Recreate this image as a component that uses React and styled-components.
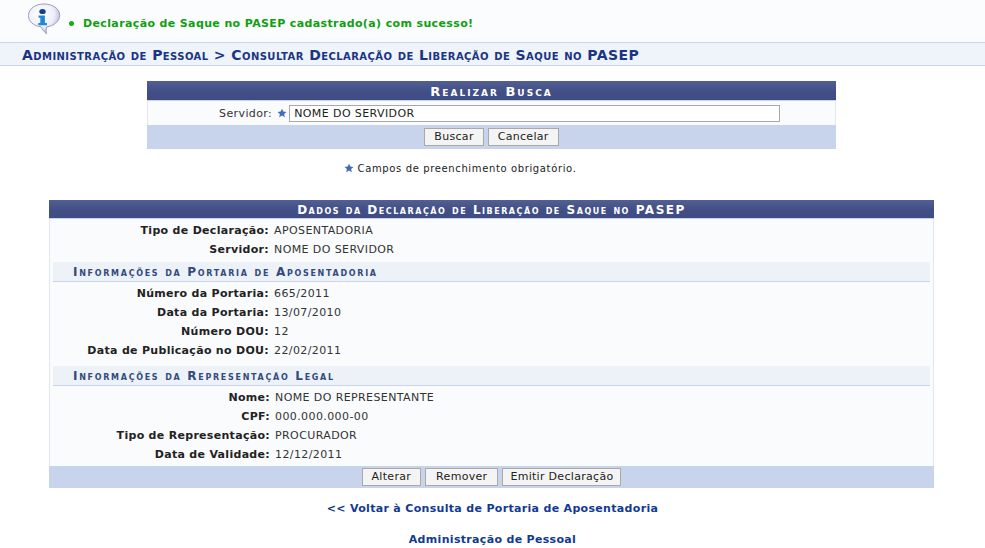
import React from "react";
import styled, { createGlobalStyle } from "styled-components";

const GlobalStyle = createGlobalStyle`
  html, body {
    margin: 0;
    padding: 0;
    background: #fff;
    font-family: "DejaVu Sans", Verdana, sans-serif;
    font-size: 11px;
    color: #222;
  }
`;

const Page = styled.div`
  width: 985px;
  height: 548px;
  overflow: hidden;
`;

const MessageBar = styled.div`
  height: 42px;
  background: #fbfcfe;
  display: flex;
  align-items: flex-start;
  padding-left: 27px;
  box-sizing: border-box;
`;

const Bubble = styled.svg`
  width: 36px;
  height: 36px;
  flex: none;
`;

const Bullet = styled.span`
  width: 5px;
  height: 5px;
  border-radius: 50%;
  background: #10b010;
  margin: 21px 9px 0 6px;
`;

const Message = styled.span`
  color: #0ea00e;
  font-weight: bold;
  font-size: 11px;
  line-height: 14px;
  margin-top: 17px;
  letter-spacing: 0.37px;
`;

const Breadcrumb = styled.h2`
  margin: 0;
  height: 22px;
  box-sizing: content-box;
  background: #eff3fa;
  border-top: 1px solid #c8d5ec;
  border-bottom: 1px solid #c8d5ec;
  padding-left: 22px;
  color: #1a3583;
  font-size: 14px;
  font-weight: bold;
  font-variant: small-caps;
  letter-spacing: 0.43px;
  line-height: 24px;
`;

const Panel = styled.section`
  width: ${(p) => p.$width}px;
  margin: ${(p) => p.$top}px 0 0 ${(p) => p.$left}px;
  background: #f9fbfd;
  border-left: 1px solid #e2e6ee;
  border-right: 1px solid #e2e6ee;
  box-sizing: border-box;
`;

const PanelTitle = styled.div`
  margin: 0 -1px;
  height: ${(p) => p.$height}px;
  background: linear-gradient(#525f93, #424f86 55%, #3f4c83);
  border-bottom: 1px solid #c8d4eb;
  box-sizing: border-box;
  color: #fff;
  font-weight: bold;
  font-variant: small-caps;
  font-size: ${(p) => p.$size}px;
  letter-spacing: ${(p) => p.$spacing}px;
  text-align: center;
  line-height: ${(p) => p.$height + 1}px;
`;

const SearchRow = styled.div`
  height: 24px;
  display: flex;
  align-items: center;
  padding-left: 71px;
`;

const SearchLabel = styled.label`
  margin-right: 5px;
  color: #333;
  letter-spacing: 0.4px;
`;

const Star = styled.svg`
  width: 10px;
  height: 10px;
  margin-right: ${(p) => p.$gap}px;
  flex: none;
`;

const TextInput = styled.input`
  width: 491px;
  height: 17px;
  box-sizing: border-box;
  border: 1px solid #a8a8a8;
  background: #fff;
  padding: 0 4px;
  font: 11px "DejaVu Sans", Verdana, sans-serif;
  letter-spacing: 0.4px;
  color: #222;
`;

const ButtonBar = styled.div`
  height: ${(p) => p.$height}px;
  margin: 0 -1px;
  background: #c8d4eb;
  display: flex;
  justify-content: center;
  align-items: center;
  gap: 4px;
`;

const Button = styled.button`
  height: 18px;
  box-sizing: border-box;
  padding: 0 ${(p) => p.$pad}px;
  border: 1px solid #a9a9a9;
  background: #f4f4f4;
  color: #222;
  font: 11px "DejaVu Sans", Verdana, sans-serif;
  letter-spacing: 0.3px;
  line-height: 16px;
`;

const Hint = styled.div`
  display: flex;
  align-items: center;
  justify-content: center;
  height: 14px;
  margin-top: 12px;
  padding-right: 65px;
  font-size: 10px;
  letter-spacing: 0.63px;
  color: #222;
`;

const Rows = styled.dl`
  margin: 0;
  padding: ${(p) => p.$top}px 0 ${(p) => p.$bottom}px;
`;

const Row = styled.div`
  display: grid;
  grid-template-columns: ${(p) => p.$label}px 1fr;
  column-gap: 5px;
  height: 19px;
  line-height: 19px;
`;

const Term = styled.dt`
  font-weight: bold;
  text-align: right;
  color: #222;
  letter-spacing: 0.3px;
`;

const Value = styled.dd`
  margin: 0;
  color: #333;
  letter-spacing: 0.4px;
`;

const SubTitle = styled.h3`
  margin: 0 3px;
  height: 20px;
  box-sizing: border-box;
  background: #edf1f8;
  border-bottom: 1px solid #c8d4eb;
  padding-left: 20px;
  color: #324a7c;
  font-size: 12px;
  font-weight: bold;
  font-variant: small-caps;
  letter-spacing: 1.7px;
  line-height: 20px;
`;

const BackLink = styled.a`
  display: block;
  text-align: center;
  color: #123a92;
  font-weight: bold;
  font-size: 11px;
  letter-spacing: 0.32px;
  line-height: 14px;
  margin-top: ${(p) => p.$top}px;
`;

const StarIcon = ({ gap }) => (
  <Star viewBox="0 0 24 24" $gap={gap}>
    <path
      fill="#4569bb"
      d="M12 1.5l3.2 7 7.6.8-5.7 5.1 1.6 7.6L12 18.2 5.3 22l1.6-7.6L1.2 9.3l7.6-.8z"
    />
  </Star>
);

const InfoIcon = () => (
  <Bubble viewBox="0 0 36 36">
    <defs>
      <radialGradient id="bubble" cx="40%" cy="35%" r="70%">
        <stop offset="0" stopColor="#ffffff" />
        <stop offset="0.6" stopColor="#eef0fa" />
        <stop offset="1" stopColor="#a9add0" />
      </radialGradient>
    </defs>
    <path
      d="M17 4C8.5 4 1.5 8.8 1.5 15.5c0 6 5 10.5 12.5 11.3 1.2 2.4 3 5 5.5 7-.5-2.2-.5-4.7.2-6.9 7-1 13-5.5 13-11.6C32.7 8.6 25.6 4 17 4z"
      fill="url(#bubble)"
      stroke="#9a9dbe"
      strokeWidth="1"
    />
    <ellipse cx="15.5" cy="11.5" rx="3.2" ry="2.6" fill="#123f86" />
    <path d="M11.5 15.5h6.4v7.6h2v2.2h-8.6v-2.2h2v-5.4h-1.8z" fill="#1f86d8" />
  </Bubble>
);

const SearchPanel = () => (
  <>
    <Panel $width={689} $left={147} $top={15}>
      <PanelTitle $height={20} $size={13} $spacing={2}>Realizar Busca</PanelTitle>
      <SearchRow>
        <SearchLabel>Servidor:</SearchLabel>
        <StarIcon gap={2} />
        <TextInput defaultValue="NOME DO SERVIDOR" />
      </SearchRow>
      <ButtonBar $height={24}>
        <Button $pad={9}>Buscar</Button>
        <Button $pad={9}>Cancelar</Button>
      </ButtonBar>
    </Panel>
    <Hint>
      <StarIcon gap={4} />
      Campos de preenchimento obrigatório.
    </Hint>
  </>
);

const DataRow = ({ label, value, width }) => (
  <Row $label={width}>
    <Term>{label}</Term>
    <Value>{value}</Value>
  </Row>
);

const DataPanel = () => (
  <Panel $width={885} $left={49} $top={25}>
    <PanelTitle $height={19} $size={12} $spacing={1.52}>Dados da Declaração de Liberação de Saque no PASEP</PanelTitle>
    <Rows $top={2} $bottom={3}>
      <DataRow width={219} label="Tipo de Declaração:" value="APOSENTADORIA" />
      <DataRow width={219} label="Servidor:" value="NOME DO SERVIDOR" />
    </Rows>
    <SubTitle>Informações da Portaria de Aposentadoria</SubTitle>
    <Rows $top={2} $bottom={6}>
      <DataRow width={219} label="Número da Portaria:" value="665/2011" />
      <DataRow width={219} label="Data da Portaria:" value="13/07/2010" />
      <DataRow width={219} label="Número DOU:" value="12" />
      <DataRow width={219} label="Data de Publicação no DOU:" value="22/02/2011" />
    </Rows>
    <SubTitle>Informações da Representação Legal</SubTitle>
    <Rows $top={2} $bottom={2}>
      <DataRow width={220} label="Nome:" value="NOME DO REPRESENTANTE" />
      <DataRow width={220} label="CPF:" value="000.000.000-00" />
      <DataRow width={220} label="Tipo de Representação:" value="PROCURADOR" />
      <DataRow width={220} label="Data de Validade:" value="12/12/2011" />
    </Rows>
    <ButtonBar $height={22}>
      <Button $pad={9}>Alterar</Button>
      <Button $pad={10}>Remover</Button>
      <Button $pad={7}>Emitir Declaração</Button>
    </ButtonBar>
  </Panel>
);

const App = () => (
  <Page>
    <GlobalStyle />
    <MessageBar>
      <InfoIcon />
      <Bullet />
      <Message>Declaração de Saque no PASEP cadastrado(a) com sucesso!</Message>
    </MessageBar>
    <Breadcrumb>Administração de Pessoal &gt; Consultar Declaração de Liberação de Saque no PASEP</Breadcrumb>
    <SearchPanel />
    <DataPanel />
    <BackLink $top={14}>&lt;&lt; Voltar à Consulta de Portaria de Aposentadoria</BackLink>
    <BackLink $top={17}>Administração de Pessoal</BackLink>
  </Page>
);

export default App;
